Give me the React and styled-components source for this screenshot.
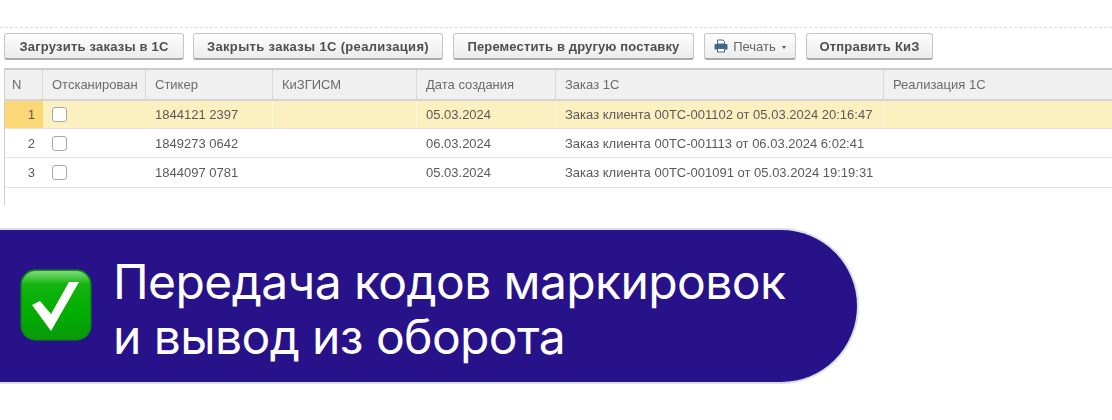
import React from 'react';
import styled, { createGlobalStyle } from 'styled-components';

const GlobalStyle = createGlobalStyle`
    html, body {
        margin: 0;
        padding: 0;
        background: #fff;
    }
`;

const Page = styled.div`
    width: 1112px;
    height: 420px;
    overflow: hidden;
    background: #fff;
    font-family: "Liberation Sans", Arial, sans-serif;
`;

const TopArea = styled.div`
    padding-top: 27px;
    height: 201px;
    box-sizing: content-box;
    filter: blur(0.35px);
`;

const Toolbar = styled.div`
    display: flex;
    align-items: flex-start;
    height: 41px;
    padding: 5px 0 0 4px;
    box-sizing: border-box;
    border-top: 1px dashed #dcdcdc;
`;

const Button = styled.button`
    display: flex;
    align-items: center;
    justify-content: center;
    gap: 5px;
    width: ${(p) => p.$w}px;
    margin-right: ${(p) => p.$gap}px;
    height: 27px;
    padding: 0;
    box-sizing: border-box;
    border: 1px solid #c6c6c6;
    border-bottom: 2px solid #a9a9a9;
    border-radius: 3px;
    background: linear-gradient(#fdfdfd, #ececec);
    color: ${(p) => (p.$plain ? '#666' : '#4f4f4f')};
    font-family: inherit;
    font-size: 13px;
    font-weight: ${(p) => (p.$plain ? 400 : 700)};
    letter-spacing: ${(p) => p.$ls || 0}px;
`;

const Caret = styled.span`
    width: 0;
    height: 0;
    margin-left: 1px;
    margin-top: 2px;
    border-left: 2.5px solid transparent;
    border-right: 2.5px solid transparent;
    border-top: 3px solid #555;
`;

const Table = styled.div`
    margin-left: 4px;
    height: 137px;
    box-sizing: border-box;
    border-left: 1px solid #cfcfcf;
    border-top: 2px solid #c9c9c9;
`;

const Row = styled.div`
    display: grid;
    grid-template-columns: 38px 103px 127px 144px 139px 328px 1fr;
    height: ${(p) => p.$h}px;
    box-sizing: border-box;
    background: ${(p) => p.$bg || '#fff'};
    border-bottom: ${(p) => p.$line};
    color: ${(p) => p.$color || '#5a5a5a'};
    font-size: 13px;
`;

const HeadCell = styled.div`
    display: flex;
    align-items: center;
    padding-left: ${(p) => p.$pad ?? 9}px;
    border-right: 1px solid #d9d9d9;
    white-space: nowrap;
    overflow: hidden;
    &:last-child { border-right: 0; }
`;

const Cell = styled.div`
    display: flex;
    align-items: center;
    padding-left: 9px;
    white-space: nowrap;
    overflow: hidden;
    border-right: 1px solid ${(p) => (p.$active ? '#fff8e0' : 'transparent')};
    &:last-child { border-right: 0; }
`;

const NumCell = styled.div`
    display: flex;
    align-items: center;
    justify-content: flex-end;
    padding-right: 8px;
    background: ${(p) => (p.$active ? '#fbd875' : 'transparent')};
`;

const CheckCell = styled.div`
    display: flex;
    align-items: center;
    padding-left: 9px;
`;

const Box = styled.span`
    width: 15px;
    height: 15px;
    box-sizing: border-box;
    border: 1px solid #a8a8a8;
    border-radius: 3px;
    background: #fff;
`;

const Banner = styled.div`
    display: flex;
    align-items: center;
    width: 859px;
    height: 156px;
    padding-left: 20px;
    box-sizing: border-box;
    border: 2px solid #d6e1ec;
    border-left: 0;
    border-radius: 0 78px 78px 0;
    background: #28128a;
`;

const Emoji = styled.svg`
    width: 72px;
    height: 72px;
    flex: none;
    margin-bottom: 2px;
`;

const Title = styled.div`
    margin-left: 21px;
    padding-top: 6px;
    color: #fff;
    font-family: Inter, "Noto Sans", sans-serif;
    font-size: 48px;
    font-weight: 400;
    line-height: 55px;
    letter-spacing: -0.6px;
`;

const rows = [
    { n: 1, h: 28, sticker: '1844121 2397', date: '05.03.2024', order: 'Заказ клиента 00ТС-001102 от 05.03.2024 20:16:47', active: true },
    { n: 2, h: 29, sticker: '1849273 0642', date: '06.03.2024', order: 'Заказ клиента 00ТС-001113 от 06.03.2024 6:02:41' },
    { n: 3, h: 30, sticker: '1844097 0781', date: '05.03.2024', order: 'Заказ клиента 00ТС-001091 от 05.03.2024 19:19:31' },
];

const PrinterIcon = () => (
    <svg width="14" height="14" viewBox="0 0 14 14">
        <path d="M3.5 1h5.5l1.5 1.5V5h-7z" fill="#fff" stroke="#4a6a85" strokeWidth="1" />
        <path d="M1.5 5h11a1 1 0 0 1 1 1v4.5h-2.5V9H3v1.5H.5V6a1 1 0 0 1 1-1z" fill="#3f6788" />
        <rect x="3.5" y="9.5" width="7" height="3.5" fill="#fff" stroke="#4a6a85" strokeWidth="1" />
    </svg>
);

const App = () => {
    return (
        <Page>
            <GlobalStyle />
            <TopArea>
                <Toolbar>
                    <Button $w={180} $gap={9} $ls={0.2}>Загрузить заказы в 1С</Button>
                    <Button $w={250} $gap={10} $ls={0.33}>Закрыть заказы 1С (реализация)</Button>
                    <Button $w={241} $gap={10} $ls={0.13}>Переместить в другую поставку</Button>
                    <Button $w={92} $gap={10} $plain>
                        <PrinterIcon />Печать<Caret />
                    </Button>
                    <Button $w={127} $gap={0} $ls={0.2}>Отправить КиЗ</Button>
                </Toolbar>
                <Table>
                    <Row $h={31} $bg="#f0f0f0" $line="2px solid #d4d4d4" $color="#6b6b6b">
                        <HeadCell $pad={7}>N</HeadCell>
                        <HeadCell>Отсканирован</HeadCell>
                        <HeadCell>Стикер</HeadCell>
                        <HeadCell>КиЗГИСМ</HeadCell>
                        <HeadCell>Дата создания</HeadCell>
                        <HeadCell>Заказ 1С</HeadCell>
                        <HeadCell>Реализация 1С</HeadCell>
                    </Row>
                    {rows.map((r) => (
                        <Row key={r.n} $h={r.h} $bg={r.active ? '#fdf0c0' : '#fff'} $line="1px solid #e4e4e4">
                            <NumCell $active={r.active}>{r.n}</NumCell>
                            <CheckCell><Box /></CheckCell>
                            <Cell $active={r.active}>{r.sticker}</Cell>
                            <Cell $active={r.active} />
                            <Cell $active={r.active}>{r.date}</Cell>
                            <Cell $active={r.active}>{r.order}</Cell>
                            <Cell />
                        </Row>
                    ))}
                </Table>
            </TopArea>
            <Banner>
                <Emoji viewBox="0 0 72 72">
                    <defs>
                        <linearGradient id="tick" x1="0" y1="0" x2="0" y2="1">
                            <stop offset="0" stopColor="#7fdc78" />
                            <stop offset="0.2" stopColor="#13b30f" />
                            <stop offset="0.6" stopColor="#00ae00" />
                            <stop offset="1" stopColor="#0a9a0a" />
                        </linearGradient>
                    </defs>
                    <rect x="0.5" y="0.5" width="71" height="71" rx="15" fill="#0a8f0a" />
                    <rect x="2" y="2" width="68" height="68" rx="14" fill="url(#tick)" />
                    <path d="M12 36L20 32L31 45L49 13H59L31 62Z" fill="#fff" />
                </Emoji>
                <Title>
                    Передача кодов маркировок<br />
                    и вывод из оборота
                </Title>
            </Banner>
        </Page>
    );
};

export default App;
